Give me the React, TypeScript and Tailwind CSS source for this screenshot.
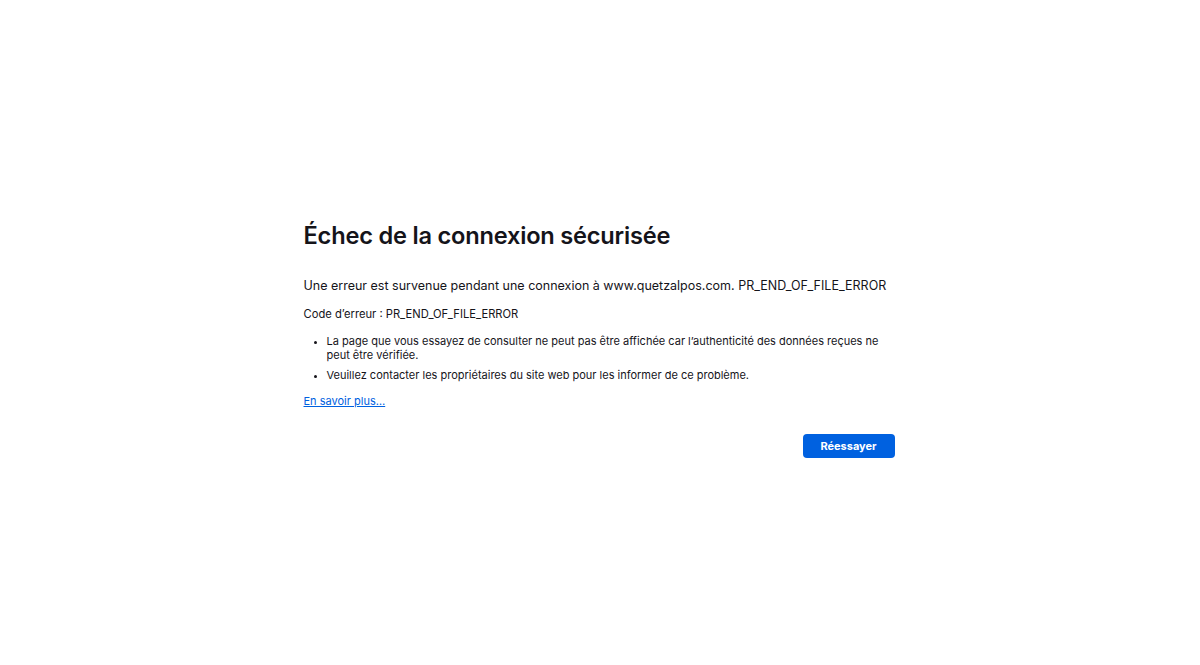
import React from "react";

export default function App() {
  return (
    <div className="min-h-[665px] w-full bg-white text-[#15141a]" style={{ fontFamily: "Inter, 'Noto Sans', sans-serif" }}>
      <div className="mx-auto w-[591px] -translate-x-[1px] pt-[221px]">
        <h1 className="text-[23.6px] font-semibold leading-[30px] tracking-[-0.2px]">Échec de la connexion sécurisée</h1>
        <p className="mt-[26px] whitespace-nowrap text-[12.5px] leading-[18px]">
          Une erreur est survenue pendant une connexion à www.quetzalpos.com. PR_END_OF_FILE_ERROR
        </p>
        <p className="mt-[12px] text-[11.2px] leading-[15px]">Code d’erreur : PR_END_OF_FILE_ERROR</p>
        <ul className="mt-[12px] list-disc pl-[23px] text-[11px] leading-[14px] marker:text-[10px]">
          <li className="pr-[8px]">
            La page que vous essayez de consulter ne peut pas être affichée car l’authenticité des données reçues ne peut être vérifiée.
          </li>
          <li className="mt-[6px]">Veuillez contacter les propriétaires du site web pour les informer de ce problème.</li>
        </ul>
        <a href="#" className="mt-[12px] inline-block text-[11px] leading-[14px] text-[#0061e0] underline">
          En savoir plus…
        </a>
        <div className="mt-[23px] flex justify-end">
          <button className="h-[24px] w-[92px] rounded-[4px] bg-[#0061e0] text-[11px] font-bold text-white">Réessayer</button>
        </div>
      </div>
    </div>
  );
}
